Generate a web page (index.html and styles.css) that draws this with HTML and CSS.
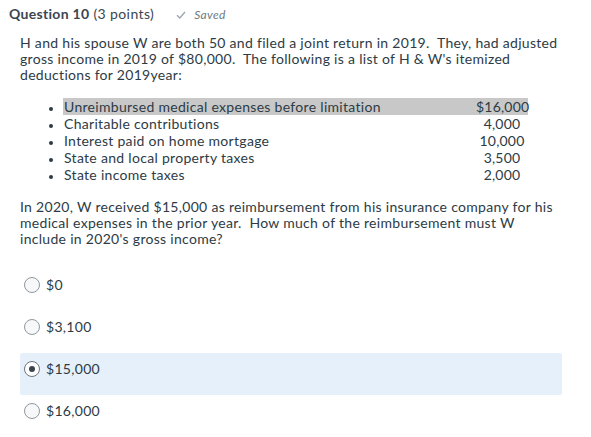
FILE: index.html
```html
<!DOCTYPE html>
<html>
<head>
<meta charset="utf-8">
<link rel="stylesheet" href="styles.css">
</head>
<body>
<div class="header">
  <span class="qtitle">Question 10</span>
  <span class="points">(3 points)</span>
  <span class="saved">
    <svg class="check" width="10" height="8" viewBox="0 0 10 8"><path d="M1 4.2 L3.8 7 L9 1" fill="none" stroke="#9aa4ab" stroke-width="1.3"/></svg>
    <em>Saved</em>
  </span>
</div>
<div class="content">
  <p class="para">H and his spouse W are both 50 and filed a joint return in 2019.&nbsp; They, had adjusted gross income in 2019 of $80,000.&nbsp; The following is a list of H &amp; W's itemized deductions for 2019year:</p>
  <ul class="items">
    <li class="item"><div class="row hl"><span class="name">Unreimbursed medical expenses before limitation</span><span class="amt">$16,000</span></div></li>
    <li class="item"><div class="row"><span class="name">Charitable contributions</span><span class="amt">4,000</span></div></li>
    <li class="item"><div class="row"><span class="name">Interest paid on home mortgage</span><span class="amt">10,000</span></div></li>
    <li class="item"><div class="row"><span class="name">State and local property taxes</span><span class="amt">3,500</span></div></li>
    <li class="item"><div class="row"><span class="name">State income taxes</span><span class="amt">2,000</span></div></li>
  </ul>
  <p class="para para2">In 2020, W received $15,000 as reimbursement from his insurance company for his medical expenses in the prior year.&nbsp; How much of the reimbursement must W include in 2020's gross income?</p>
  <div class="options">
    <div class="option"><span class="radio"></span><span class="label">$0</span></div>
    <div class="option"><span class="radio"></span><span class="label">$3,100</span></div>
    <div class="option selected"><span class="radio checked"></span><span class="label">$15,000</span></div>
    <div class="option"><span class="radio"></span><span class="label">$16,000</span></div>
  </div>
</div>
</body>
</html>
```
FILE: styles.css
```css
html, body {
  margin: 0;
  padding: 0;
  background: #ffffff;
}
body {
  font-family: Lato, "Liberation Sans", sans-serif;
  color: #2d3b45;
  width: 591px;
  height: 437px;
  overflow: hidden;
  letter-spacing: 0.3px;
  font-variant-ligatures: none;
}
.header {
  display: flex;
  align-items: baseline;
  height: 28px;
  line-height: 28px;
  padding-left: 9px;
}
.qtitle {
  font-weight: bold;
  font-size: 14px;
  color: #3b4650;
  letter-spacing: 0.3px;
}
.points {
  font-size: 14px;
  margin-left: 4px;
  color: #3b4650;
  letter-spacing: 0.4px;
}
.saved {
  margin-left: 22px;
  font-size: 12px;
  color: #6f7a82;
  display: flex;
  align-items: center;
}
.check {
  margin-right: 8px;
}
.content {
  padding: 7px 29px 0 20px;
}
.para {
  margin: 0;
  font-size: 14px;
  line-height: 16px;
  color: #2d3b45;
}
.items {
  margin: 15px 0 0 0;
  padding: 0 0 0 43px;
  font-size: 14px;
  line-height: 17px;
  width: 465px;
  list-style: disc;
}
.item::marker {
  font-size: 11px;
}
.row {
  display: flex;
}
.row.hl {
  background: #c8c8c8;
}
.name {
  flex: 1;
  padding-left: 1px;
}
.amt {
  width: 52px;
  text-align: center;
  letter-spacing: 0.2px;
}
.para2 {
  margin-top: 16px;
}
.options {
  margin-top: 22px;
}
.option {
  display: flex;
  align-items: center;
  height: 42px;
  box-sizing: border-box;
  padding: 0 0 11px 4px;
  border-radius: 2px;
}
.option.selected {
  background: #e5f0fa;
}
.radio {
  width: 14px;
  height: 14px;
  border: 1px solid #8f989f;
  border-radius: 50%;
  background: #f7f8f9;
  position: relative;
  flex: none;
}
.radio.checked {
  background: #ffffff;
  border-color: #6c757c;
}
.radio.checked::after {
  content: "";
  position: absolute;
  left: 4px;
  top: 4px;
  width: 6px;
  height: 6px;
  border-radius: 50%;
  background: #3a444c;
}
.label {
  margin-left: 6px;
  font-size: 14px;
  color: #2d3b45;
}
```
